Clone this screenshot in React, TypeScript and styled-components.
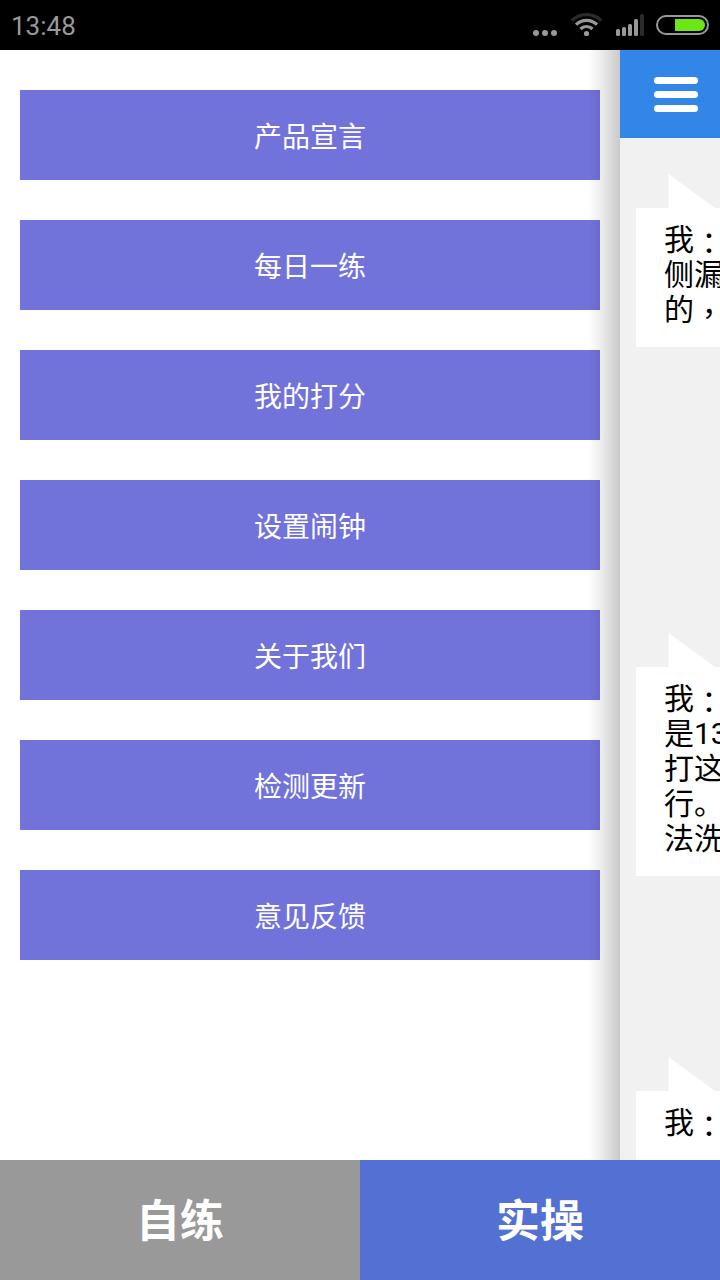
import React from "react";
import styled, { createGlobalStyle } from "styled-components";

const GlobalStyle = createGlobalStyle`
  *, *::before, *::after { box-sizing: border-box; }
  body {
    margin: 0;
    background: #ffffff;
    font-family: Roboto, "Noto Sans CJK SC", sans-serif;
  }
  button {
    margin: 0;
    padding: 0;
    border: 0;
    border-radius: 0;
    font-family: inherit;
    cursor: pointer;
  }
`;

const Screen = styled.div`
  display: flex;
  flex-direction: column;
  height: 100vh;
  overflow: hidden;
`;

const StatusBar = styled.header`
  display: flex;
  flex: none;
  align-items: center;
  justify-content: space-between;
  height: 50px;
  padding: 0 8px 0 11px;
  background: #000000;
  color: #999999;
`;

const Clock = styled.time`
  padding-top: 2px;
  font-size: 26px;
  line-height: 32px;
`;

const Body = styled.div`
  display: flex;
  flex: 1;
  min-height: 0;
`;

const Drawer = styled.nav`
  position: relative;
  flex: 1;
  min-width: 0;
  padding: 40px 20px;
  background: #ffffff;

  &::after {
    content: "";
    position: absolute;
    top: 0;
    right: 0;
    bottom: 0;
    width: 32px;
    background: linear-gradient(
      to right,
      rgba(0, 0, 0, 0),
      rgba(0, 0, 0, 0.07) 40%,
      rgba(0, 0, 0, 0.21)
    );
    pointer-events: none;
  }
`;

const MenuList = styled.ul`
  display: flex;
  flex-direction: column;
  gap: 40px;
  margin: 0;
  padding: 0;
  list-style: none;
`;

const MenuButton = styled.button`
  display: block;
  width: 100%;
  height: 90px;
  background: #7272db;
  color: #ffffff;
  font-family: "Noto Sans CJK SC", sans-serif;
  font-size: 28px;
  line-height: 40px;
`;

const Chat = styled.main`
  flex: none;
  width: 100px;
  overflow: hidden;
  background: #f1f1f1;
`;

const ChatHeader = styled.div`
  display: flex;
  height: 88px;
  background: #3186e7;
`;

const ToggleButton = styled.button`
  display: grid;
  place-items: center;
  width: 100%;
  padding-left: 12px;
  background: transparent;
`;

const Messages = styled.div`
  padding: 36px 0 0 16px;
`;

const Message = styled.article<{ $after: number }>`
  margin-bottom: ${({ $after }) => $after}px;
`;

const Tail = styled.svg`
  display: block;
  margin-left: 32px;
`;

const Bubble = styled.p`
  width: max-content;
  min-width: 100%;
  margin: 0;
  padding: 14px 28px 20px;
  background: #ffffff;
  color: #000000;
  font-size: 30px;
  line-height: 35px;
  white-space: pre;
`;

const Mark = styled.span`
  font-family: "Noto Sans CJK TC", sans-serif;
  line-height: 20px;
  vertical-align: -4px;
`;

const TabBar = styled.nav`
  display: flex;
  flex: none;
  height: 120px;
`;

const Tab = styled.button<{ $active?: boolean }>`
  flex: 1;
  padding-top: 4px;
  background: ${({ $active }) => ($active ? "#5370d3" : "#999999")};
  color: #ffffff;
  font-size: 44px;
  font-weight: 700;
  line-height: 64px;
`;

const menu = [
  "产品宣言",
  "每日一练",
  "我的打分",
  "设置闹钟",
  "关于我们",
  "检测更新",
  "意见反馈",
];

const messages = [
  { text: "我：\n侧漏\n的，", after: 286 },
  { text: "我：\n是13\n打这\n行。\n法洗", after: 181 },
  { text: "我：\n", after: 0 },
];

/* Colons and commas sit in the middle of their full-width cell. */
function withCentredMarks(text: string) {
  return text.split(/([：，])/).map((part, index) =>
    index % 2 ? (
      <Mark key={index} lang="zh-TW">
        {part}
      </Mark>
    ) : (
      part
    )
  );
}

function StatusIcons() {
  return (
    <svg width="180" height="30" viewBox="532 10 180 30" fill="#999999" aria-hidden="true">
      <circle cx="536" cy="33" r="3" />
      <circle cx="545" cy="33" r="3" />
      <circle cx="554" cy="33" r="3" />
      <circle cx="586.5" cy="33.5" r="2.6" />
      <g fill="none" strokeWidth="3.2">
        <path d="M580.5 29 A8.5 8.5 0 0 1 592.5 29" stroke="#999999" />
        <path d="M576 24.7 A15 15 0 0 1 597 24.7" stroke="#999999" />
        <path d="M571.8 20.7 A21 21 0 0 1 601.2 20.7" stroke="#2b2b2b" />
      </g>
      <rect x="616" y="29" width="4" height="7" rx="1.5" />
      <rect x="622" y="27" width="4" height="9" rx="1.5" />
      <rect x="628" y="24" width="4" height="12" rx="1.5" />
      <rect x="634" y="19" width="4" height="17" rx="1.5" />
      <rect x="640" y="14" width="4" height="22" rx="1.5" fill="#2b2b2b" />
      <rect x="657" y="16" width="51" height="18" rx="9" fill="none" stroke="#999999" strokeWidth="2" />
      <path d="M675 19 H699 A6 6 0 0 1 699 31 H675 Z" fill="#6ae714" />
    </svg>
  );
}

export default function App() {
  return (
    <>
      <GlobalStyle />
      <Screen lang="zh-CN">
        <StatusBar>
          <Clock>13:48</Clock>
          <StatusIcons />
        </StatusBar>
        <Body>
          <Drawer>
            <MenuList>
              {menu.map((label) => (
                <li key={label}>
                  <MenuButton type="button">{label}</MenuButton>
                </li>
              ))}
            </MenuList>
          </Drawer>
          <Chat>
            <ChatHeader>
              <ToggleButton type="button" aria-label="菜单">
                <svg width="44" height="36" viewBox="0 0 44 36" fill="#ffffff" aria-hidden="true">
                  <rect x="0" y="1" width="44" height="7" rx="3.5" />
                  <rect x="0" y="15" width="44" height="7" rx="3.5" />
                  <rect x="0" y="29" width="44" height="7" rx="3.5" />
                </svg>
              </ToggleButton>
            </ChatHeader>
            <Messages>
              {messages.map(({ text, after }, index) => (
                <Message key={index} $after={after}>
                  <Tail width="52" height="34" viewBox="0 0 52 34" aria-hidden="true">
                    <path d="M0.5 0 L47 34 H0.5 Z" fill="#ffffff" />
                  </Tail>
                  <Bubble>{withCentredMarks(text)}</Bubble>
                </Message>
              ))}
            </Messages>
          </Chat>
        </Body>
        <TabBar>
          <Tab type="button">自练</Tab>
          <Tab type="button" $active>
            实操
          </Tab>
        </TabBar>
      </Screen>
    </>
  );
}
